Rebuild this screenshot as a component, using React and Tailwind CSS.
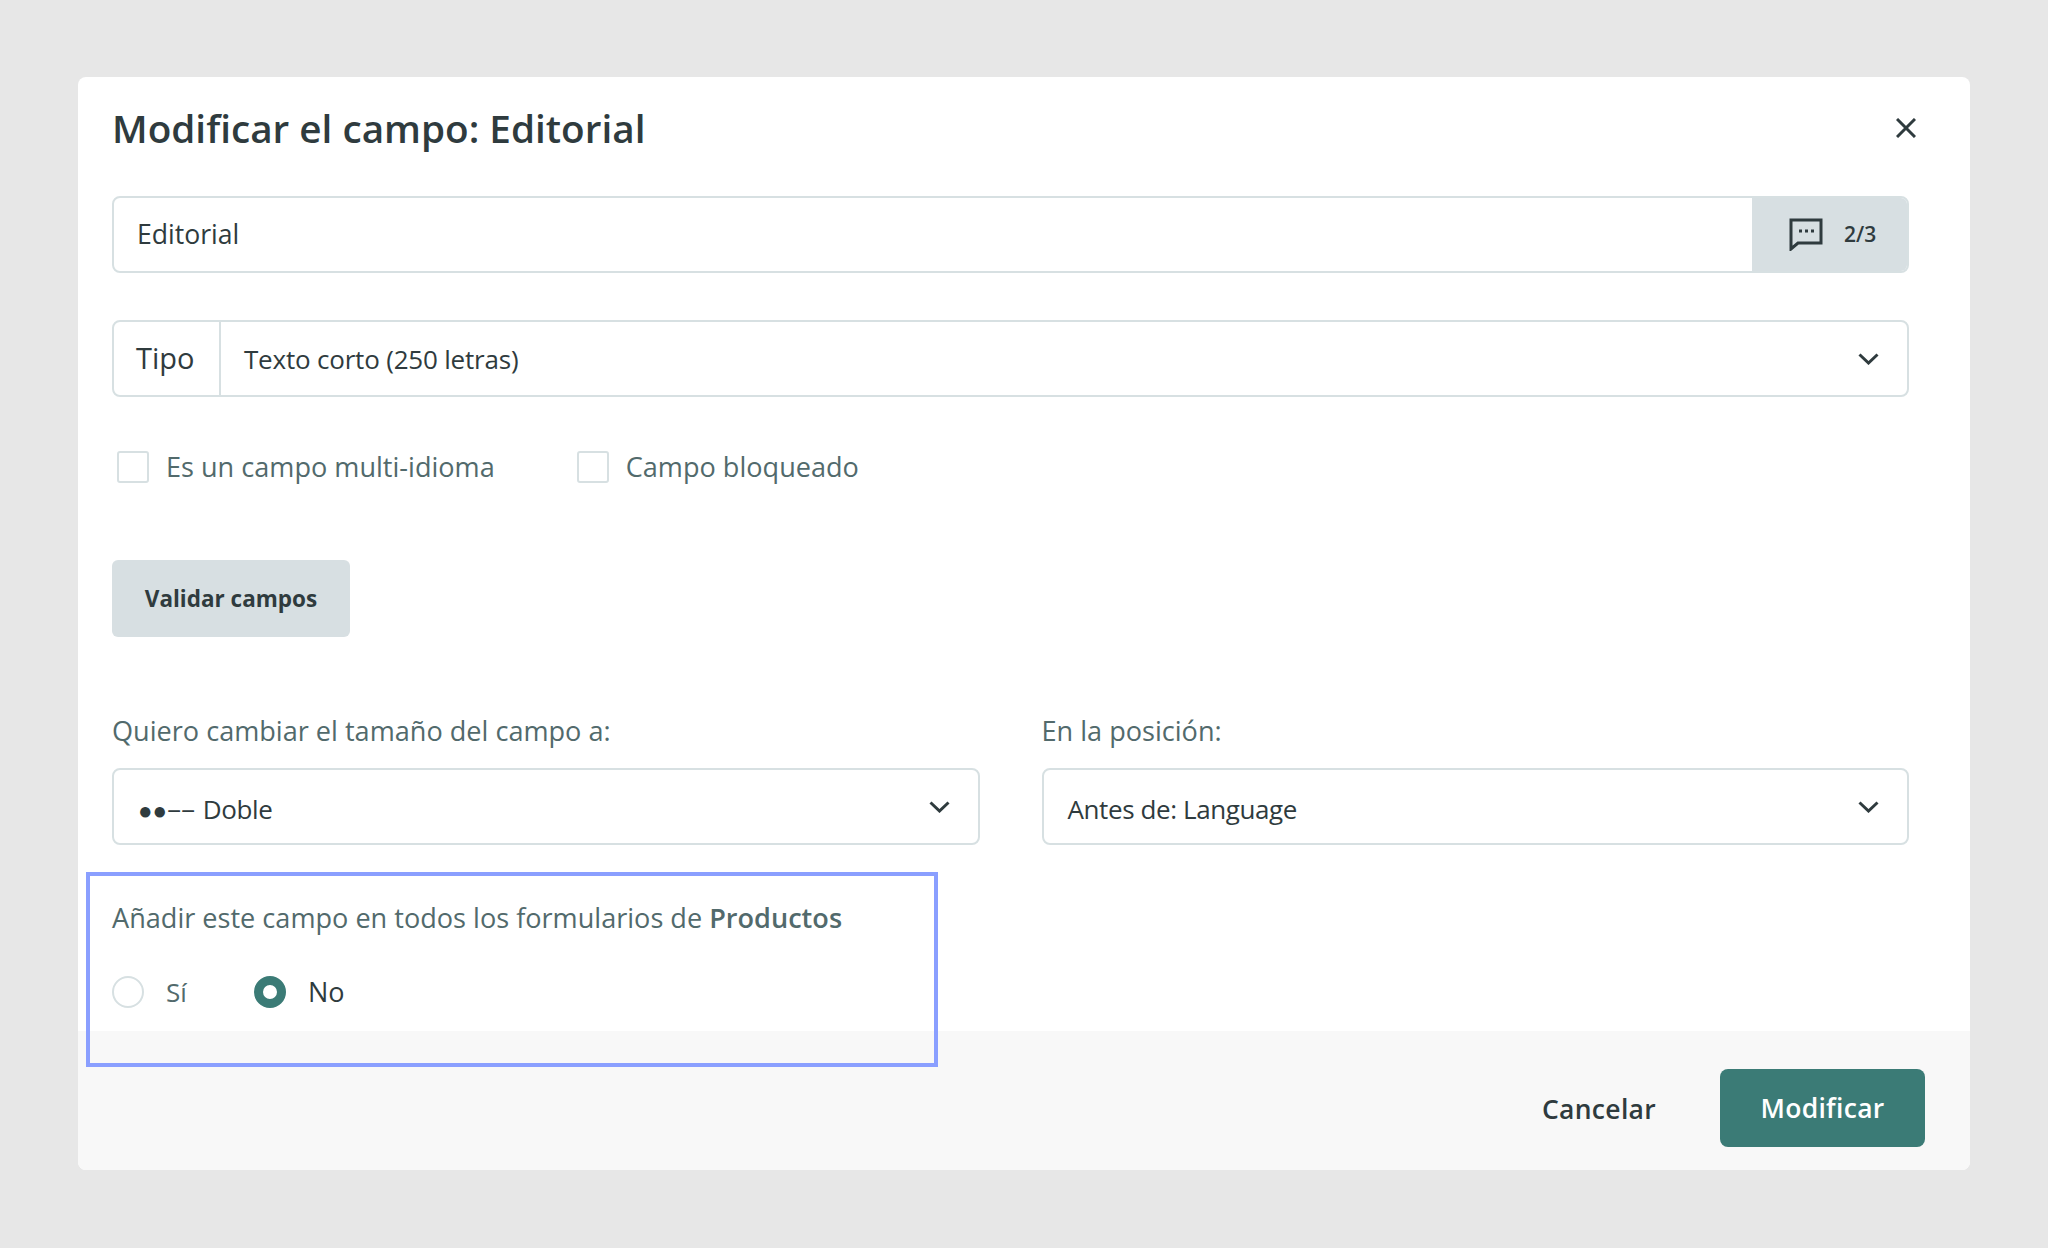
import React from "react";

const Chevron = () => (
  <svg width="21" height="12" viewBox="0 0 21 12" fill="none" className="shrink-0">
    <path d="M1.5 1.5 L10.5 10 L19.5 1.5" stroke="#2f3b3e" strokeWidth="3" />
  </svg>
);

const Select = ({ className, children }) => (
  <div className={"flex h-[77px] items-center justify-between rounded-[8px] border-2 border-[#d7e0e2] bg-white pl-[24px] pr-[28px] " + className}>
    {children}
    <Chevron />
  </div>
);

const Check = ({ label }) => (
  <div className="flex items-center gap-[17px]">
    <span className="h-[32px] w-[32px] rounded-[3px] border-2 border-[#d7e0e2] bg-white" />
    <span className="text-[27.1px] leading-[32px] text-[#526a6c]">{label}</span>
  </div>
);

export default function App() {
  return (
    <div className="h-[1248px] w-[2048px] bg-[#e7e7e7] pl-[78px] pt-[77px] font-['Open_Sans',sans-serif]">
      <div className="relative flex h-[1093px] w-[1892px] flex-col overflow-hidden rounded-[8px] bg-white">
        <div className="flex-1 pl-[34px] pt-[27px]">
          <div className="mb-[44px] flex h-[48px] w-[1804px] items-center justify-between">
            <h1 className="pb-[1px] text-[38.7px] font-semibold leading-[48px] text-[#2f3b3e]">Modificar el campo: Editorial</h1>
            <svg width="20" height="20" viewBox="0 0 20 20" fill="none">
              <path d="M1 1 L19 19 M19 1 L1 19" stroke="#2f3b3e" strokeWidth="3" />
            </svg>
          </div>

          <div className="flex h-[77px] w-[1797px] overflow-hidden rounded-[8px] border-2 border-[#d7e0e2] bg-white">
            <div className="flex flex-1 items-center pl-[23px] text-[26.6px] text-[#2f3b3e]">Editorial</div>
            <div className="flex w-[155px] items-center gap-[21px] bg-[#d7dfe2] pl-[37px]">
              <svg width="34" height="33" viewBox="0 0 34 33" fill="none">
                <path d="M2 2 H32 V25 H9 L2 31 Z" stroke="#2f3b3e" strokeWidth="3" />
                <path d="M10 13 H13 M16 13 H19 M22 13 H25" stroke="#2f3b3e" strokeWidth="3" />
              </svg>
              <span className="text-[21px] font-semibold text-[#2f3b3e]">2/3</span>
            </div>
          </div>

          <div className="mt-[47px] flex h-[77px] w-[1797px] items-center rounded-[8px] border-2 border-[#d7e0e2] bg-white pr-[28px]">
            <div className="flex h-full w-[107px] items-center border-r-2 border-[#d7e0e2] pb-[2px] pl-[22px] text-[29px] text-[#2f3b3e]">Tipo</div>
            <div className="flex flex-1 items-center pl-[23px] pt-[2px] text-[26px] tracking-[-0.2px] text-[#2f3b3e]">Texto corto (250 letras)</div>
            <Chevron />
          </div>

          <div className="mt-[54px] flex gap-[82px] pl-[5px]">
            <Check label="Es un campo multi-idioma" />
            <Check label="Campo bloqueado" />
          </div>

          <button className="mt-[77px] block h-[77px] w-[238px] rounded-[6px] bg-[#d7dfe2] text-[22.5px] font-bold text-[#2f3b3e]">Validar campos</button>

          <div className="mt-[75px] grid w-[1797px] grid-cols-2 gap-x-[62px]">
            <div>
              <div className="mb-[18px] text-[27.1px] leading-[38px] text-[#526a6c]">Quiero cambiar el tamaño del campo a:</div>
              <Select className="">
                <span className="flex items-center pt-[6px] text-[26px] tracking-[-0.4px] text-[#2f3b3e]">
                  <span className="text-[24px] leading-[36px] tracking-[0px]">●●</span>
                  <span className="text-[25px] leading-[36px]">−−</span>
                  <span className="ml-[8px]">Doble</span>
                </span>
              </Select>
            </div>
            <div>
              <div className="mb-[18px] text-[27.1px] leading-[38px] text-[#526a6c]">En la posición:</div>
              <Select className=""><span className="pt-[6px] text-[26px] tracking-[-0.4px] text-[#2f3b3e]">Antes de: Language</span></Select>
            </div>
          </div>

          <p className="mt-[54px] text-[27.1px] leading-[38px] text-[#526a6c]">
            Añadir este campo en todos los formularios de <strong className="font-semibold">Productos</strong>
          </p>

          <div className="mt-[35px] flex items-center">
            <span className="h-[32px] w-[32px] rounded-full border-2 border-[#d7e0e2] bg-white" />
            <span className="ml-[22px] w-[88px] text-[26px] text-[#526a6c]">Sí</span>
            <span className="h-[32px] w-[32px] rounded-full border-[9px] border-[#3b7b76] bg-white" />
            <span className="ml-[22px] text-[27px] text-[#2f3b3e]">No</span>
          </div>
        </div>

        <div className="flex h-[139px] items-start justify-end gap-[64px] bg-[#f8f8f8] pr-[45px] pt-[38px]">
          <span className="mt-[21px] text-[26.5px] font-semibold leading-[38px] tracking-[0.3px] text-[#2f3b3e]">Cancelar</span>
          <button className="h-[78px] w-[205px] rounded-[8px] bg-[#3b7b76] pt-[2px] text-[26.5px] font-semibold tracking-[0.3px] text-white">Modificar</button>
        </div>

        <div className="pointer-events-none absolute left-[8px] top-[795px] h-[195px] w-[852px] border-[4px] border-[#8a9fff]" />
      </div>
    </div>
  );
}
